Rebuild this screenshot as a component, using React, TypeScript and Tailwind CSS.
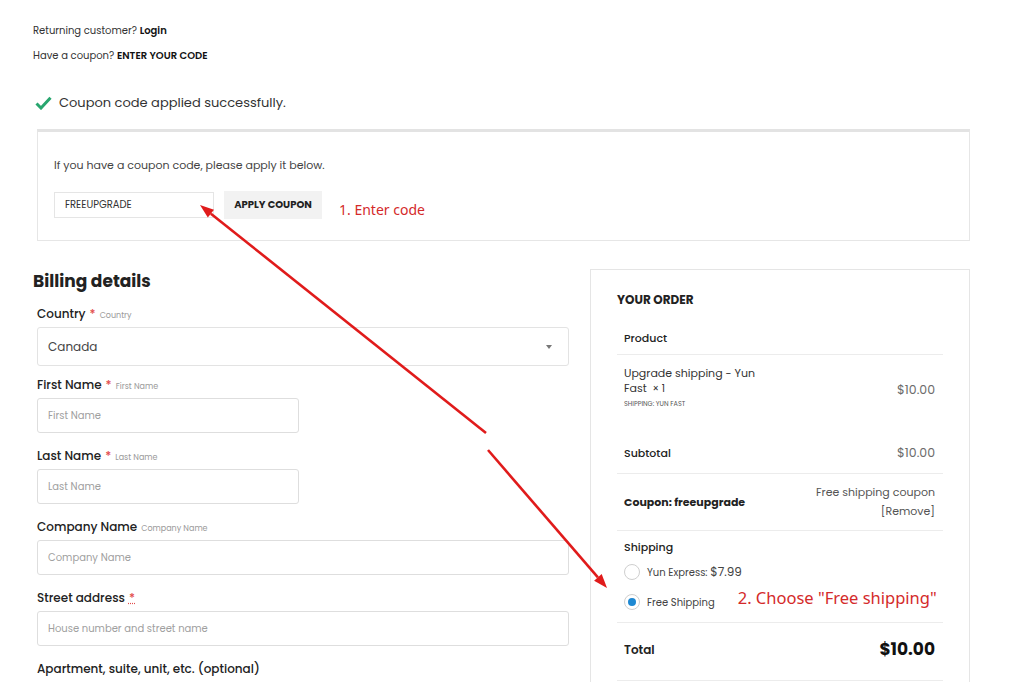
import React from 'react';

const FONT = { fontFamily: 'Poppins, Inter, "Noto Sans", sans-serif' };
const NOTE = { fontFamily: '"Noto Sans", "Open Sans", sans-serif' };

function Field({
  label,
  hint,
  required,
  dotted,
  placeholder,
  wide,
  gap = 'mt-[15px]',
}: {
  label: string;
  hint?: string;
  required?: boolean;
  dotted?: boolean;
  placeholder: string;
  wide?: boolean;
  gap?: string;
}) {
  return (
    <div className={gap}>
      <div className="h-[16px] leading-[16px] text-[12px] font-medium text-[#222] flex items-baseline">
        <span>{label}</span>
        {required && (
          <span className={`text-[#e24b4b] ml-[4px] ${dotted ? 'underline decoration-dotted' : ''}`}>*</span>
        )}
        {hint && <span className="ml-[4px] text-[8px] font-normal text-[#9a9a9a]">{hint}</span>}
      </div>
      <div
        className={`mt-[5px] h-[35px] border border-[#dedede] rounded-[3px] bg-white flex items-center pl-[10px] text-[10px] text-[#a0a0a0] ${
          wide ? 'w-[532px]' : 'w-[262px]'
        }`}
      >
        {placeholder}
      </div>
    </div>
  );
}

function Radio({ checked }: { checked?: boolean }) {
  return (
    <span className="w-[16px] h-[16px] rounded-full border border-[#cfcfcf] bg-white flex items-center justify-center shrink-0">
      {checked && <span className="w-[8px] h-[8px] rounded-full bg-[#1e88d2]" />}
    </span>
  );
}

export default function App() {
  return (
    <div className="relative w-[1024px] h-[682px] overflow-hidden bg-white text-[#222]" style={FONT}>
      <div className="pl-[33px] pr-[54px] pt-[21px]">
        <div className="h-[20px] leading-[20px] text-[10px] text-[#333]">
          Returning customer? <span className="font-semibold text-[#111]">Login</span>
        </div>
        <div className="mt-[5px] h-[20px] leading-[20px] text-[10px] text-[#333]">
          Have a coupon? <span className="font-semibold text-[#111]">ENTER YOUR CODE</span>
        </div>
        <div className="mt-[27px] h-[20px] flex items-center">
          <svg width="17" height="14" viewBox="0 0 17 14" className="ml-[2px]">
            <path d="M1.5 7.5 L6 12 L15.5 1.8" fill="none" stroke="#28a66f" strokeWidth="3" strokeLinejoin="miter" />
          </svg>
          <span className="ml-[7px] text-[13px] text-[#333]">Coupon code applied successfully.</span>
        </div>

        <div className="mt-[16px] ml-[4px] border border-[#e6e6e6] border-t-[3px] border-t-[#e3e3e3] pl-[16px] pt-[23px] pb-[20px]">
          <div className="h-[20px] leading-[20px] text-[11px] text-[#444]">
            If you have a coupon code, please apply it below.
          </div>
          <div className="mt-[14px] flex items-center">
            <div className="w-[160px] h-[26px] border border-[#e5e5e5] flex items-center pl-[10px] text-[10px] text-[#333]">
              FREEUPGRADE
            </div>
            <div className="ml-[10px] w-[98px] h-[28px] bg-[#f2f2f2] flex items-center justify-center text-[10px] font-bold text-[#222]">
              APPLY COUPON
            </div>
            <span className="ml-[17px] mt-[10px] text-[14px] text-[#d42a2a]" style={NOTE}>
              1. Enter code
            </span>
          </div>
        </div>

        <div className="mt-[28px] flex gap-[21px]">
          <div className="w-[536px]">
            <div className="h-[24px] leading-[24px] text-[17px] font-bold text-[#222]">Billing details</div>
            <div className="pl-[4px] mt-[13px]">
              <div>
                <div className="h-[16px] leading-[16px] text-[12px] font-medium text-[#222] flex items-baseline">
                  <span>Country</span>
                  <span className="text-[#e24b4b] ml-[4px]">*</span>
                  <span className="ml-[4px] text-[8px] font-normal text-[#9a9a9a]">Country</span>
                </div>
                <div className="mt-[5px] w-[532px] h-[39px] border border-[#e3e3e3] rounded-[3px] flex items-center justify-between pl-[10px] pr-[16px] text-[12px] text-[#444]">
                  <span>Canada</span>
                  <span className="w-0 h-0 border-l-[3.5px] border-r-[3.5px] border-t-[4px] border-l-transparent border-r-transparent border-t-[#777]" />
                </div>
              </div>
              <Field label="First Name" hint="First Name" required placeholder="First Name" gap="mt-[11px]" />
              <Field label="Last Name" hint="Last Name" required placeholder="Last Name" />
              <Field label="Company Name" hint="Company Name" placeholder="Company Name" wide />
              <Field label="Street address" required dotted placeholder="House number and street name" wide />
              <Field label="Apartment, suite, unit, etc. (optional)" placeholder="" wide />
            </div>
          </div>

          <div className="w-[380px] h-[440px] border border-[#e5e5e5] px-[26px] pt-[22px]">
            <div className="h-[16px] leading-[16px] text-[12px] font-bold text-[#222]">YOUR ORDER</div>
            <div className="mt-[14px]">
              <div className="h-[33px] border-b border-[#ececec] pl-[7px] flex items-center text-[11px] font-medium text-[#222]">
                Product
              </div>
              <div className="h-[78px] pl-[7px] pr-[8px] flex items-start justify-between pt-[11px]">
                <div>
                  <div className="text-[11px] leading-[15px] text-[#333]">
                    Upgrade shipping - Yun
                    <br />
                    Fast&nbsp; <span className="text-[10px]">× 1</span>
                  </div>
                  <div className="mt-[2px] text-[6.5px] leading-[12px] text-[#555]">SHIPPING: YUN FAST</div>
                </div>
                <div className="mt-[15px] text-[12.5px] text-[#6b6b6b]">$10.00</div>
              </div>
              <div className="h-[41px] border-b border-[#ececec] pl-[7px] pr-[8px] flex items-center justify-between">
                <span className="text-[11px] font-medium text-[#222]">Subtotal</span>
                <span className="text-[12.5px] text-[#6b6b6b]">$10.00</span>
              </div>
              <div className="h-[57px] border-b border-[#ececec] pl-[7px] pr-[8px] flex items-center justify-between">
                <span className="text-[11px] font-bold text-[#222]">Coupon: freeupgrade</span>
                <span className="text-[11px] leading-[19px] text-right text-[#555]">
                  Free shipping coupon
                  <br />
                  [Remove]
                </span>
              </div>
              <div className="h-[92px] border-b border-[#ececec] pl-[7px] pt-[8px]">
                <div className="h-[16px] leading-[16px] text-[11px] font-medium text-[#222]">Shipping</div>
                <div className="mt-[7px] h-[20px] flex items-center">
                  <Radio />
                  <span className="ml-[7px] text-[10px] text-[#444]">
                    Yun Express: <span className="text-[12px]">$7.99</span>
                  </span>
                </div>
                <div className="mt-[10px] h-[20px] flex items-center">
                  <Radio checked />
                  <span className="ml-[7px] text-[10px] text-[#444]">Free Shipping</span>
                  <span className="ml-[23px] -mt-[8px] text-[16.5px] text-[#d42a2a] whitespace-nowrap" style={NOTE}>
                    2. Choose "Free shipping"
                  </span>
                </div>
              </div>
              <div className="h-[58px] border-b border-[#ececec] pl-[7px] pr-[8px] pb-[3px] flex items-center justify-between">
                <span className="text-[12px] font-semibold text-[#222]">Total</span>
                <span className="text-[17px] font-bold text-[#111]">$10.00</span>
              </div>
            </div>
          </div>
        </div>
      </div>

      <svg className="absolute inset-0 pointer-events-none" width="1024" height="682" viewBox="0 0 1024 682">
        <line x1="486" y1="433" x2="210.9" y2="213.7" stroke="#e01b1b" strokeWidth="2.6" />
        <polygon points="200,205 214,209.8 207.8,217.6" fill="#e01b1b" />
        <line x1="488" y1="450" x2="597.9" y2="577.4" stroke="#e01b1b" strokeWidth="2.6" />
        <polygon points="607,588 594.1,580.7 601.7,574.1" fill="#e01b1b" />
      </svg>
    </div>
  );
}
